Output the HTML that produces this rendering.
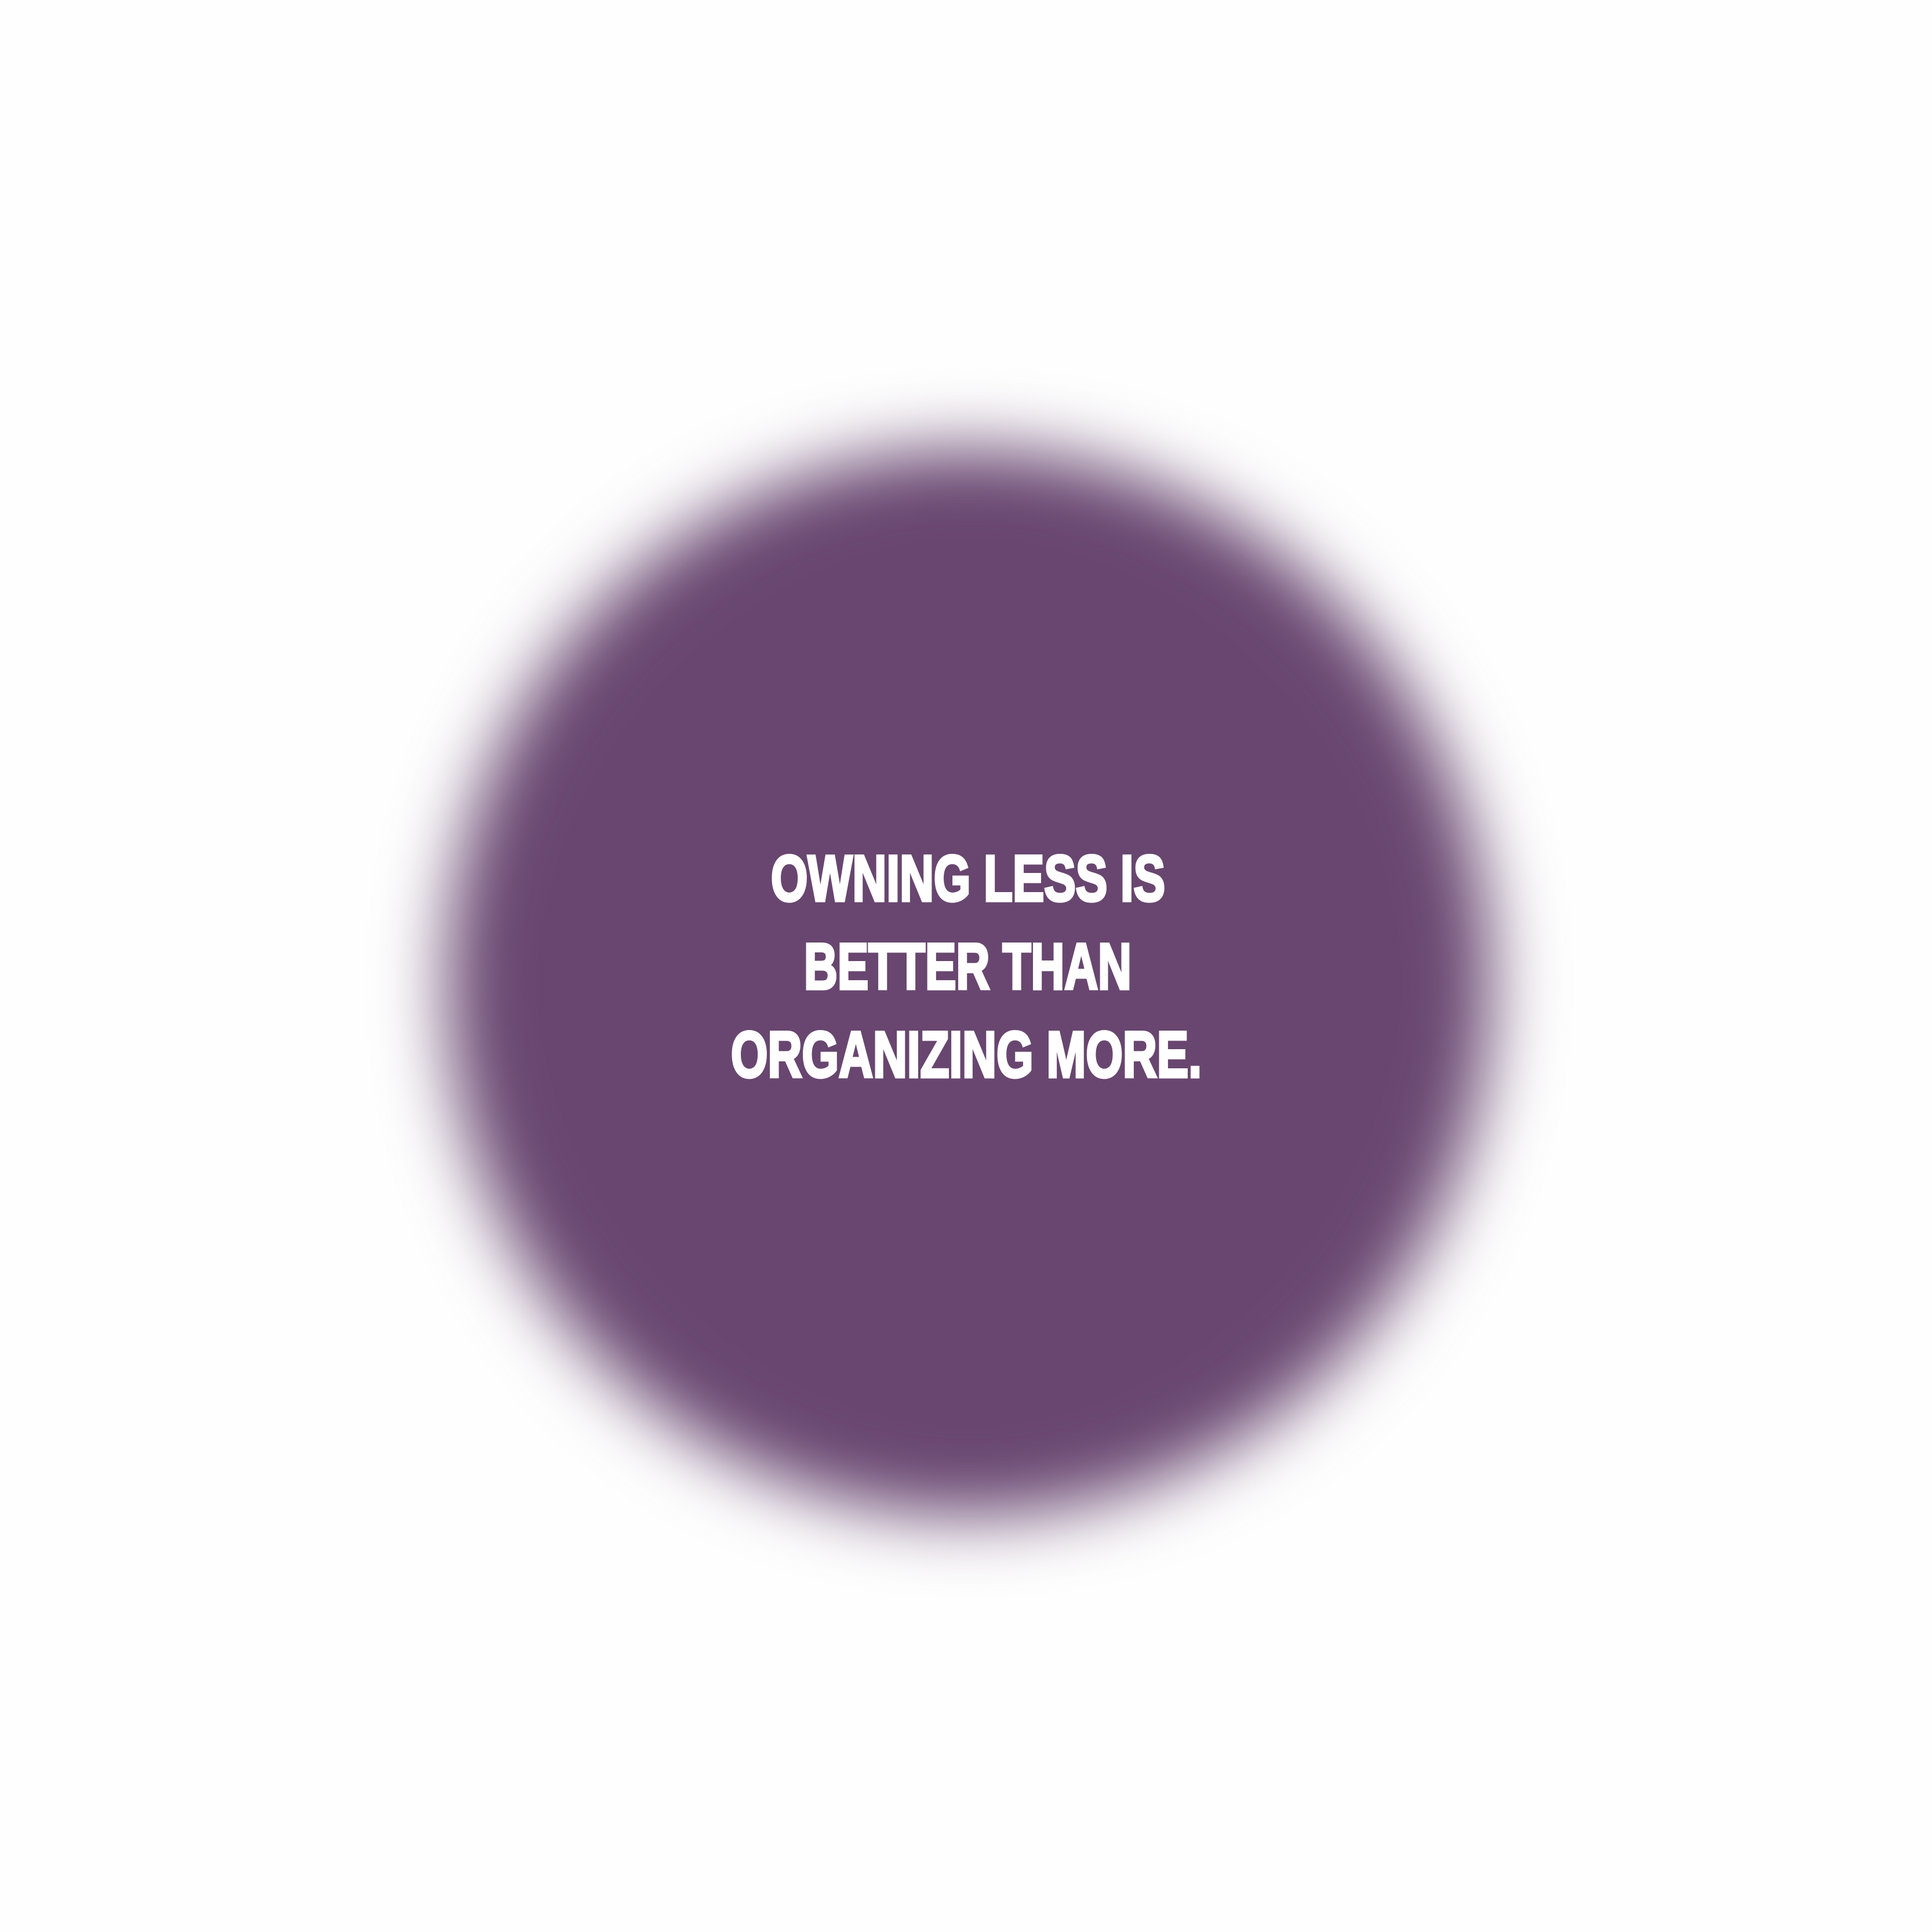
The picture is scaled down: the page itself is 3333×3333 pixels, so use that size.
<!DOCTYPE html>
<html><head><meta charset="utf-8">
<style>
html,body{margin:0;padding:0;background:#fefefe;width:3333px;height:3333px;overflow:hidden;position:relative}
.blob{position:absolute;left:772px;top:775px;width:1800px;height:1840px;border-radius:50%;background:#684670;filter:blur(60px)}
svg{position:absolute;left:0;top:0}
</style></head><body>
<div class="blob"></div>
<svg width="3333" height="3333" xmlns="http://www.w3.org/2000/svg">
<g fill="#ffffff" stroke="#ffffff" stroke-width="5" font-family="'Liberation Sans Narrow','Liberation Sans',sans-serif" font-weight="bold" font-size="112">
<text x="1330" y="1554" textLength="680" lengthAdjust="spacingAndGlyphs">OWNING LESS IS</text>
<text x="1387" y="1706" textLength="565" lengthAdjust="spacingAndGlyphs">BETTER THAN</text>
<text x="1261" y="1858" textLength="812" lengthAdjust="spacingAndGlyphs">ORGANIZING MORE.</text>
</g>
</svg>
</body></html>
